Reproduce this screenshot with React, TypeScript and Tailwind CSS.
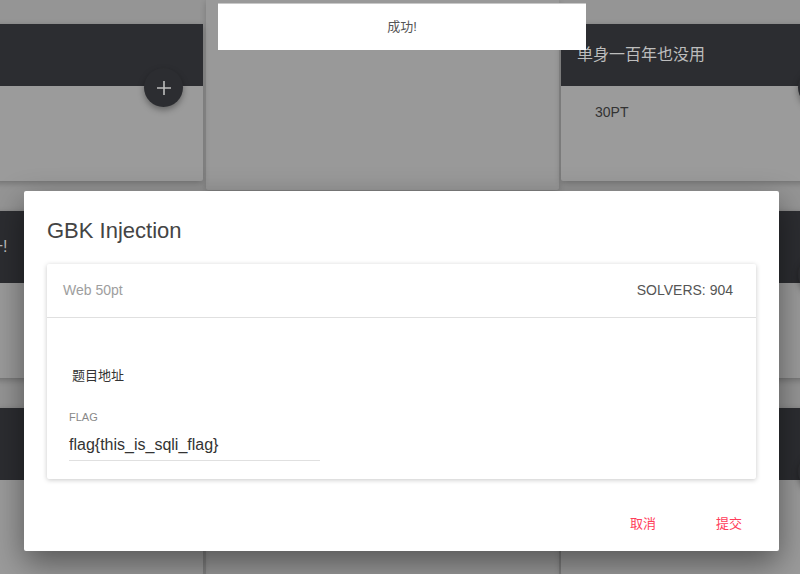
const Plus = () => (
  <div className="absolute right-[20px] top-[44px] flex h-[39px] w-[39px] items-center justify-center rounded-full bg-[#2c2d31] shadow-[0_3px_6px_rgba(0,0,0,0.35)]">
    <svg width="16" height="16" viewBox="0 0 16 16" stroke="#bdbdbd" strokeWidth="1.6">
      <path d="M8 1v14M1 8h14" />
    </svg>
  </div>
);

function BgCard({ title, pt, h, head = "h-[62px]" }: { title?: string; pt?: string; h: string; head?: string }) {
  return (
    <div className={`relative shrink-0 rounded-[2px] bg-[#9b9b9b] shadow-[0_2px_6px_rgba(0,0,0,0.25)] ${h}`}>
      <div className={`flex items-center bg-[#2c2d31] px-[16px] text-[16px] text-[#bdbdbd] ${head}`}>{title}</div>
      {pt && <div className="pl-[34px] pt-[16px] text-[14px] text-[#333]">{pt}</div>}
      <Plus />
    </div>
  );
}

export default function App() {
  return (
    <div className="relative h-[574px] w-[800px] overflow-hidden bg-[#959595] font-['Liberation_Sans','Noto_Sans_CJK_SC',sans-serif]">
      {/* cards behind the backdrop */}
      <div className="ml-[-93px] flex items-start">
        <div className="flex w-[296px] shrink-0 flex-col gap-[30px] pt-[24px]">
          <BgCard h="h-[157px]" />
          <BgCard h="h-[167px]" head="h-[72px]" title="送分题冲一!" />
          <BgCard h="h-[167px]" head="h-[72px]" />
        </div>
        <div className="ml-[3px] flex w-[353px] shrink-0 flex-col gap-[30px]">
          <div className="h-[190px] rounded-b-[2px] bg-[#999] shadow-[0_2px_6px_rgba(0,0,0,0.2)]" />
          <div className="h-[360px] rounded-[2px] bg-[#999] shadow-[0_2px_6px_rgba(0,0,0,0.2)]" />
        </div>
        <div className="ml-[2px] flex w-[296px] shrink-0 flex-col gap-[30px] pt-[24px]">
          <BgCard h="h-[157px]" title="单身一百年也没用" pt="30PT" />
          <BgCard h="h-[167px]" head="h-[72px]" title="Web" />
          <BgCard h="h-[167px]" head="h-[72px]" title="Web" />
        </div>
      </div>

      {/* toast */}
      <div className="absolute left-[218px] top-[3px] flex h-[47px] w-[368px] items-center justify-center border-t border-[#c8c8c8] bg-white text-[13px] text-[#555]">
        成功!
      </div>

      {/* dialog */}
      <div className="absolute left-[24px] top-[191px] h-[360px] w-[755px] rounded-[2px] bg-white px-[23px] shadow-[0_12px_32px_rgba(0,0,0,0.45)]">
        <h2 className="pt-[26px] text-[22px] leading-[28px] text-[#444]">GBK Injection</h2>

        <div className="mt-[19px] rounded-[2px] bg-white shadow-[0_1px_5px_rgba(0,0,0,0.22)]">
          <div className="flex h-[54px] items-center justify-between border-b border-[#e0e0e0] px-[16px]">
            <span className="text-[14px] text-[#9e9e9e]">Web 50pt</span>
            <span className="pr-[7px] text-[14px] text-[#555]">SOLVERS: 904</span>
          </div>
          <div className="px-[22px] pb-[18px] pt-[48px]">
            <div className="pl-[3px] text-[13px] leading-[20px] text-[#333]">题目地址</div>
            <div className="mt-[24px] text-[11px] leading-[14px] text-[#888]">FLAG</div>
            <div className="mt-[9px] h-[28px] w-[251px] border-b border-[#e0e0e0] text-[16px] leading-[24px] text-[#333]">
              flag{"{"}this_is_sqli_flag{"}"}
            </div>
          </div>
        </div>

        <div className="mt-[35px] flex justify-end gap-[60px] pr-[14px] text-[13px] leading-[20px] text-[#ff3d5a]">
          <button>取消</button>
          <button>提交</button>
        </div>
      </div>
    </div>
  );
}
